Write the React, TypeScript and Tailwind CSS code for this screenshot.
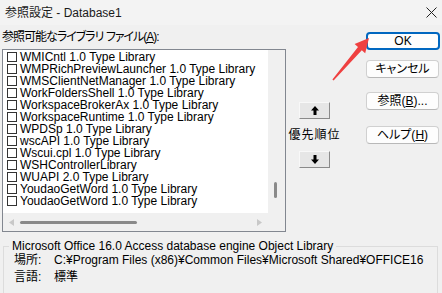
import React from 'react';

const libs = [
  'WMICntl 1.0 Type Library',
  'WMPRichPreviewLauncher 1.0 Type Library',
  'WMSClientNetManager 1.0 Type Library',
  'WorkFoldersShell 1.0 Type Library',
  'WorkspaceBrokerAx 1.0 Type Library',
  'WorkspaceRuntime 1.0 Type Library',
  'WPDSp 1.0 Type Library',
  'wscAPI 1.0 Type Library',
  'Wscui.cpl 1.0 Type Library',
  'WSHControllerLibrary',
  'WUAPI 2.0 Type Library',
  'YoudaoGetWord 1.0 Type Library',
  'YoudaoGetWord 1.0 Type Library',
];

function Btn({ children, primary }: { children: React.ReactNode; primary?: boolean }) {
  return (
    <button
      type="button"
      className={
        primary
          ? 'flex h-[18px] w-[74px] items-center justify-center rounded-[4px] border-2 border-[#0067c0] bg-[#fdfdfd] text-[12px] leading-none text-black'
          : 'flex h-[18px] w-[73px] items-center justify-center rounded-[4px] border border-[#d0d0d0] border-b-[#b8b8b8] bg-[#fdfdfd] text-[12px] leading-none text-black'
      }
    >
      {children}
    </button>
  );
}

function MoveBtn({ up }: { up?: boolean }) {
  return (
    <button
      type="button"
      className="flex h-[17px] w-[31px] items-center justify-center border border-[#f8f8f8] border-b-[#8a8a8a] border-r-[#8a8a8a] bg-[#e6e6e6]"
    >
      <svg width="8" height="9" viewBox="0 0 8 9">
        {up ? (
          <path d="M4 0 L8 4.5 L5.5 4.5 L5.5 9 L2.5 9 L2.5 4.5 L0 4.5 Z" fill="#000" />
        ) : (
          <path d="M4 9 L8 4.5 L5.5 4.5 L5.5 0 L2.5 0 L2.5 4.5 L0 4.5 Z" fill="#000" />
        )}
      </svg>
    </button>
  );
}

export default function App() {
  return (
    <div className="relative h-[293px] w-[442px] overflow-hidden bg-[#f0f0f0] font-['Liberation_Sans','Noto_Sans_CJK_JP',sans-serif] text-[12px] text-black [font-feature-settings:'palt']">
      {/* title bar */}
      <div className="flex h-[25px] items-center justify-between bg-[#f3f3f3] pl-[5px] pr-[4px]">
        <span className="text-[12px] text-[#1a1a1a]">参照設定 - Database1</span>
        <svg width="11" height="11" viewBox="0 0 11 11" className="mr-[1px]">
          <path d="M0.5 0.5 L10.5 10.5 M10.5 0.5 L0.5 10.5" stroke="#222" strokeWidth="1" />
        </svg>
      </div>

      <div className="flex">
        {/* library list */}
        <div className="ml-[2px] w-[284px]">
          <div className="h-[24px] whitespace-nowrap pt-[5px] leading-[14px] tracking-[-1px]">
            参照可能なライブラリ ファイル(<span className="underline">A</span>):
          </div>
          <div className="grid h-[183px] grid-cols-[1fr_17px] grid-rows-[1fr_18px] border border-[#828790] bg-white">
            <div className="overflow-hidden pt-[1px]">
              {libs.map((name, i) => (
                <div key={i} className="flex h-[12px] items-center whitespace-nowrap pl-[4px] leading-[12px]">
                  <span className="mr-[3px] h-[10px] w-[10px] shrink-0 border border-[#333] bg-white" />
                  {name}
                </div>
              ))}
            </div>
            <div className="relative bg-[#f0f0f0]">
              <div className="absolute left-[6px] top-[132px] h-[16px] w-[3px] rounded-full bg-[#8a8a8a]" />
            </div>
            <div className="flex items-center bg-[#f0f0f0] px-[6px]">
              <svg width="5" height="7" viewBox="0 0 5 7">
                <path d="M0 3.5 L5 0 L5 7 Z" fill="#c8c8c8" />
              </svg>
              <div className="ml-[6px] h-[3px] w-[117px] rounded-full bg-[#8a8a8a]" />
              <div className="flex-1" />
              <svg width="5" height="7" viewBox="0 0 5 7">
                <path d="M5 3.5 L0 0 L0 7 Z" fill="#c8c8c8" />
              </svg>
            </div>
            <div className="bg-[#f0f0f0]" />
          </div>
        </div>

        {/* priority */}
        <div className="ml-[1px] flex w-[55px] flex-col items-center pt-[77px]">
          <MoveBtn up />
          <div className="my-[7px] leading-[18px] text-[12px] tracking-[1px]">優先順位</div>
          <MoveBtn />
        </div>

        {/* buttons */}
        <div className="ml-[24px] flex flex-col pt-[7px]">
          <Btn primary>OK</Btn>
          <div className="mt-[10px]">
            <Btn>キャンセル</Btn>
          </div>
          <div className="mt-[14px]">
            <Btn>
              参照(<span className="underline">B</span>)...
            </Btn>
          </div>
          <div className="mt-[16px]">
            <Btn>
              ヘルプ(<span className="underline">H</span>)
            </Btn>
          </div>
        </div>
      </div>

      {/* info group */}
      <div className="relative ml-[3px] mt-[14px] h-[60px] w-[435px] border border-[#dcdcdc] pl-[10px] pt-[6px]">
        <div className="absolute -top-[8px] left-[5px] bg-[#f0f0f0] px-[3px] leading-[14px]">
          Microsoft Office 16.0 Access database engine Object Library
        </div>
        <div className="flex leading-[14px]">
          <span className="w-[40px]">場所:</span>
          <span>C:¥Program Files (x86)¥Common Files¥Microsoft Shared¥OFFICE16</span>
        </div>
        <div className="mt-[3px] flex leading-[14px]">
          <span className="w-[40px]">言語:</span>
          <span>標準</span>
        </div>
      </div>

      {/* annotation arrow */}
      <svg className="pointer-events-none absolute left-0 top-0" width="442" height="293">
        <polygon
          points="332.4,79.5 358,47 354.6,44 369,38 365.2,53.2 361.8,50.2 333.6,80.5"
          fill="#ef4040"
        />
      </svg>
    </div>
  );
}
